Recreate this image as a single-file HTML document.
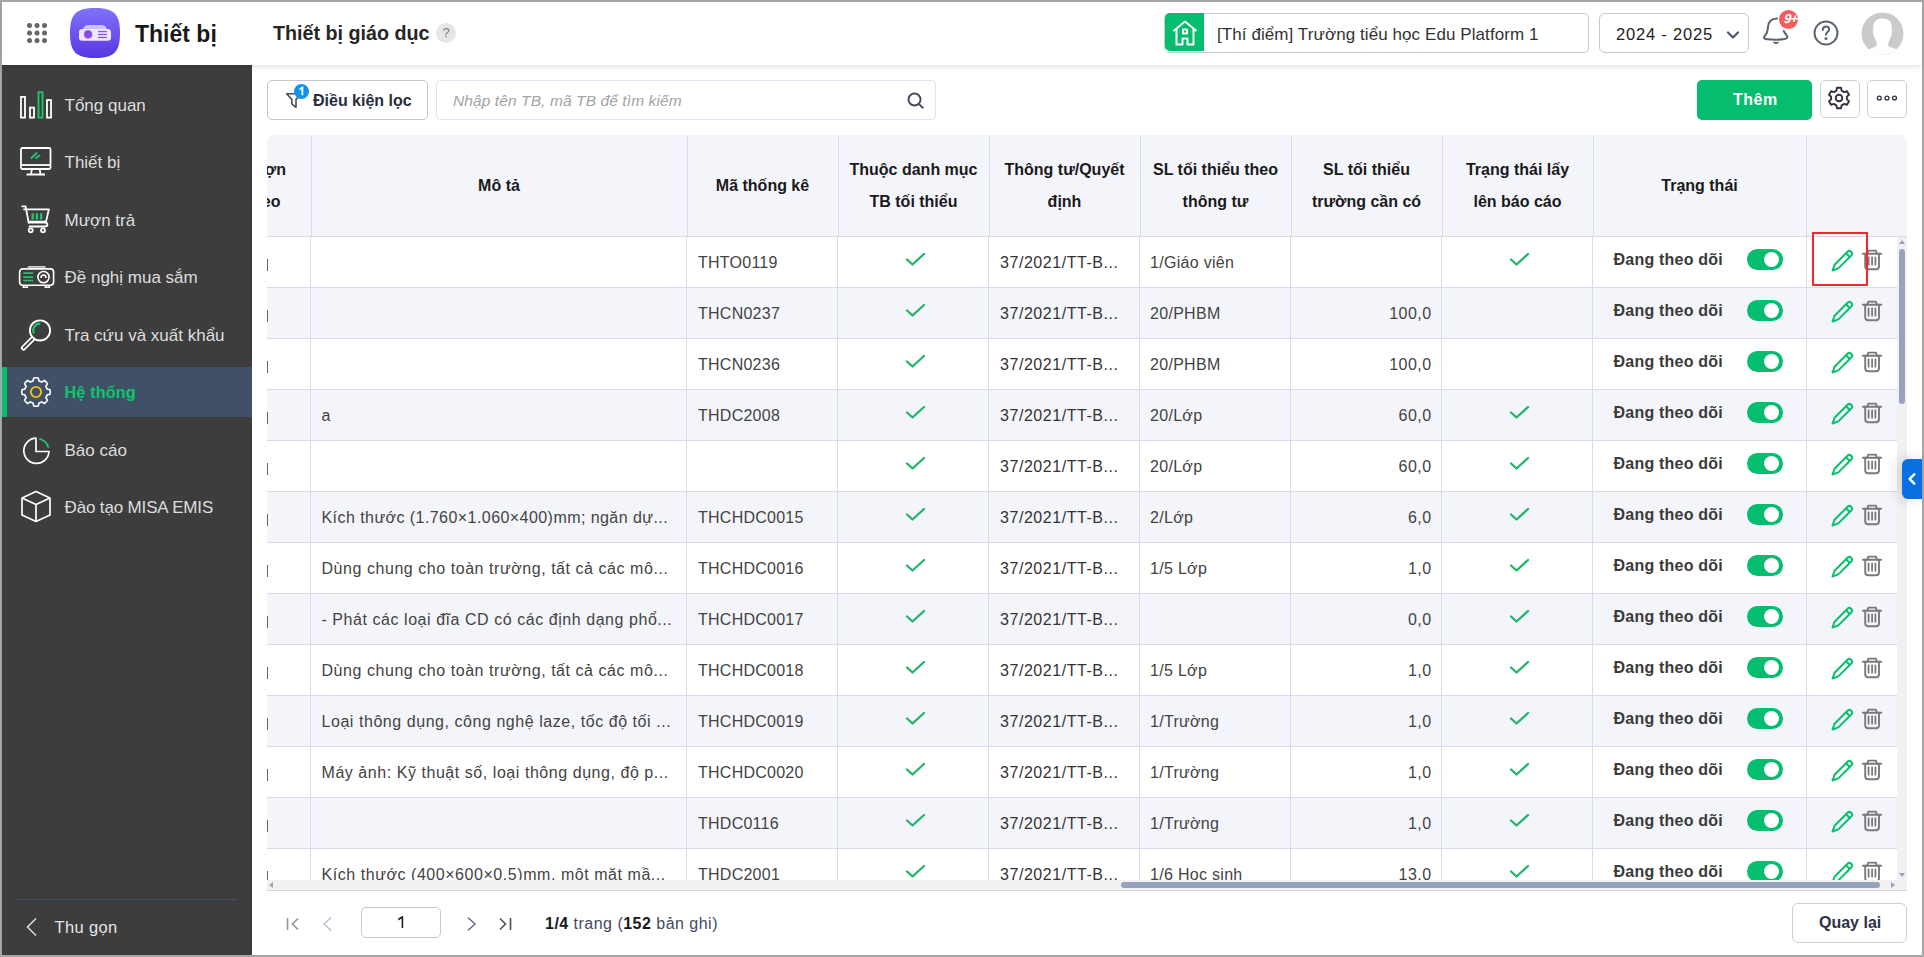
<!DOCTYPE html>
<html><head><meta charset="utf-8"><title>Thiết bị giáo dục</title>
<style>
*{box-sizing:border-box;margin:0;padding:0}
html,body{width:1924px;height:957px;overflow:hidden;background:#a6a6a6}
body{font-family:"Liberation Sans",sans-serif;position:relative;color:#333}
.abs{position:absolute}
.t{position:absolute;white-space:nowrap;line-height:1}
svg{display:block}
</style></head><body>
<div class="abs" style="left:2px;top:2px;width:1920px;height:953px;background:#fff"></div><div class="abs" style="left:2px;top:2px;width:1920px;height:63px;background:#fff;z-index:3;box-shadow:0 2px 5px rgba(0,0,0,0.11)"></div><div class="abs" style="left:0;top:0;z-index:4"><svg class="abs" style="left:27px;top:23px" width="20" height="20" viewBox="0 0 20 20"><circle cx="2.5" cy="2.5" r="2.5" fill="#666"/><circle cx="2.5" cy="10.0" r="2.5" fill="#666"/><circle cx="2.5" cy="17.5" r="2.5" fill="#666"/><circle cx="10.0" cy="2.5" r="2.5" fill="#666"/><circle cx="10.0" cy="10.0" r="2.5" fill="#666"/><circle cx="10.0" cy="17.5" r="2.5" fill="#666"/><circle cx="17.5" cy="2.5" r="2.5" fill="#666"/><circle cx="17.5" cy="10.0" r="2.5" fill="#666"/><circle cx="17.5" cy="17.5" r="2.5" fill="#666"/></svg><svg class="abs" style="left:70px;top:8px" width="50" height="50" viewBox="0 0 50 50">
<defs><linearGradient id="lg" x1="0" y1="0" x2="0" y2="1"><stop offset="0" stop-color="#7f74fa"/><stop offset="1" stop-color="#5a35e2"/></linearGradient>
<linearGradient id="pg" x1="1" y1="0" x2="0" y2="1"><stop offset="0" stop-color="#4f63ee"/><stop offset="1" stop-color="#b53ad6"/></linearGradient></defs>
<path d="M25 0 C44 0 50 6 50 25 C50 44 44 50 25 50 C6 50 0 44 0 25 C0 6 6 0 25 0Z" fill="url(#lg)"/>
<path d="M13 21.5 Q13.5 17 19 17 L31 17 Q36.5 17 37 21.5Z" fill="#cdc3fc"/>
<rect x="9" y="21" width="32" height="11.8" rx="3.3" fill="#efe9ff"/>
<circle cx="18.1" cy="26.4" r="4.1" fill="url(#pg)" stroke="#e27bd8" stroke-width="0.5"/>
<rect x="28.1" y="22.9" width="8.8" height="1.3" fill="#8a4fe6"/><rect x="28.1" y="25.8" width="8.8" height="1.3" fill="#8a4fe6"/><rect x="28.1" y="28.8" width="8.8" height="1.3" fill="#8a4fe6"/>
</svg><div class="t" style="left:135px;top:22.65px;font-size:23px;font-weight:700;color:#1a1a1a;">Thiết bị</div><div class="t" style="left:273px;top:23.76px;font-size:19.7px;font-weight:700;color:#262626;">Thiết bị giáo dục</div><div class="abs" style="left:436px;top:23px;width:20px;height:20px;border-radius:50%;background:#e6e6e6;color:#7a7a7a;font-size:13px;line-height:20px;text-align:center">?</div><div class="abs" style="left:1164px;top:13px;width:425px;height:40px;border:1px solid #c9c9c9;border-radius:5px"></div><div class="abs" style="left:1164.5px;top:13px;width:39.5px;height:38px;background:#04bd6f;border-radius:5px 0 0 5px"></div><svg class="abs" style="left:1172px;top:20px" width="26" height="26" viewBox="0 0 26 26" fill="none" stroke="#fff" stroke-width="2" stroke-linejoin="round">
<path d="M1.5 11 L13 1.5 L24.5 11"/><path d="M4.5 9 V24.5 H10.5 V18.5 H15.5 V24.5 H21.5 V9"/><rect x="11" y="9.5" width="4" height="4"/></svg><div class="t" style="left:1217px;top:25.75px;font-size:17px;font-weight:400;color:#333;letter-spacing:0.08px">[Thí điểm] Trường tiểu học Edu Platform 1</div><div class="abs" style="left:1599px;top:13px;width:150px;height:40px;border:1px solid #c9c9c9;border-radius:6px"></div><div class="t" style="left:1616px;top:25.98px;font-size:16.5px;font-weight:400;color:#222;letter-spacing:0.8px">2024 - 2025</div><svg class="abs" style="left:1726px;top:30px" width="14" height="10" viewBox="0 0 14 10"><path d="M2 2.5 L7 7.5 L12 2.5" fill="none" stroke="#505575" stroke-width="2.2" stroke-linecap="round" stroke-linejoin="round"/></svg><svg class="abs" style="left:1761px;top:14.8px" width="30" height="30" viewBox="0 0 30 30" fill="none" stroke="#5c6370" stroke-width="2" stroke-linecap="round">
<path d="M16 3.4 C10.3 3.5 7.3 6.8 7 12 C6.7 16.5 6.2 18.5 3.7 21 C2.3 22.6 3 23.9 6 24.2 C12 24.8 19 24.8 23.5 24.1 C26.2 23.6 27 22.4 25.6 20.4 C24.6 19 23.6 17.6 22.7 16"/><path d="M12.6 27.6 Q15 30 17.4 27.6 Z" fill="#5c6370" stroke-width="1"/></svg><div class="abs" style="left:1778.6px;top:9.5px;width:19.5px;height:19.5px;border-radius:50%;background:#f55d5d"></div><div class="abs" style="left:1781px;top:9px;width:20px;height:20px;color:#fff;font-size:13px;font-weight:700;line-height:19px;text-align:center;letter-spacing:-0.6px;transform:skewX(-14deg)">9+</div><svg class="abs" style="left:1813px;top:20px" width="26" height="26" viewBox="0 0 26 26" fill="none" stroke="#5c6370" stroke-width="2" stroke-linecap="round">
<circle cx="13" cy="13" r="11.5"/><path d="M9.8 10 C9.8 7.5 11.5 6.5 13 6.5 C14.8 6.5 16.2 7.7 16.2 9.5 C16.2 11.8 13 12 13 14.8"/><circle cx="13" cy="18.5" r="0.6" fill="#5c6370"/></svg><svg class="abs" style="left:1861px;top:12px" width="43" height="43" viewBox="0 0 43 43">
<defs><clipPath id="avc"><circle cx="21.5" cy="21.5" r="21"/></clipPath></defs>
<circle cx="21.5" cy="21.5" r="21" fill="#cbcbcb"/>
<path clip-path="url(#avc)" d="M21.5 6.6 C15.6 6.6 12.6 9.4 12.4 14.3 L12.1 18.6 C12 22.2 12.9 24.4 14 26.6 L15.9 31.8 C16.3 33.4 15.2 34.6 12.6 35.5 L9.6 36.6 C8 37.2 7 38.5 7 40 V48 H36 V40 C36 38.5 35 37.2 33.4 36.6 L30.4 35.5 C27.8 34.6 26.7 33.4 27.1 31.8 L29 26.6 C30.1 24.4 31 22.2 30.9 18.6 L30.6 14.3 C30.4 9.4 27.4 6.6 21.5 6.6Z" fill="#fff"/>
</svg></div><div class="abs" style="left:2px;top:65px;width:250px;height:890px;background:#3d3d3d"></div><div class="abs" style="left:2px;top:367px;width:250px;height:50px;background:#405066"></div><div class="abs" style="left:2px;top:367px;width:5px;height:50px;background:#04bd6f"></div><div class="t" style="left:64.5px;top:96.55px;font-size:17px;font-weight:400;color:#dedede;">Tổng quan</div><div class="t" style="left:64.5px;top:153.55px;font-size:17px;font-weight:400;color:#dedede;">Thiết bị</div><div class="t" style="left:64.5px;top:211.55px;font-size:17px;font-weight:400;color:#dedede;">Mượn trả</div><div class="t" style="left:64.5px;top:269.05px;font-size:17px;font-weight:400;color:#dedede;">Đề nghị mua sắm</div><div class="t" style="left:64.5px;top:326.55px;font-size:17px;font-weight:400;color:#dedede;">Tra cứu và xuất khẩu</div><div class="t" style="left:64.5px;top:384.23px;font-size:16.2px;font-weight:700;color:#0bc66c;letter-spacing:0.15px">Hệ thống</div><div class="t" style="left:64.5px;top:441.55px;font-size:17px;font-weight:400;color:#dedede;">Báo cáo</div><div class="t" style="left:64.5px;top:499.05px;font-size:17px;font-weight:400;color:#dedede;letter-spacing:-0.15px">Đào tạo MISA EMIS</div><svg class="abs" style="left:19px;top:91px" width="34" height="29" viewBox="0 0 34 29" fill="none" stroke-width="1.8">
<rect x="2" y="5.9" width="4" height="20.7" stroke="#fff"/><rect x="11" y="16.6" width="4" height="10" stroke="#fff"/><rect x="19.5" y="1.2" width="4" height="25.4" stroke="#22c56e"/><rect x="28" y="9.1" width="4" height="17.5" stroke="#fff"/></svg><svg class="abs" style="left:20px;top:147px" width="32" height="29" viewBox="0 0 32 29" fill="none" stroke-width="1.8">
<rect x="1" y="1" width="29.5" height="21" rx="1.5" stroke="#fff"/><path d="M1 18 H30.5" stroke="#fff"/><path d="M12 22 L11 26.5 M19.5 22 L20.5 26.5 M6.5 27.5 H25" stroke="#fff"/>
<path d="M11.5 11 L16.5 6 M16 11 L19.5 8.5" stroke="#22c56e" stroke-width="1.9" stroke-linecap="round"/></svg><svg class="abs" style="left:21px;top:205px" width="30" height="29" viewBox="0 0 30 29" fill="none" stroke-width="1.8" stroke-linecap="round" stroke-linejoin="round">
<path d="M1.3 1.4 H4.6 L7.7 17.6" stroke="#fff"/><path d="M3 4.3 H27.9 L25 16.6 H7.5" stroke="#fff"/>
<path d="M7.7 17.6 H24 C27.2 17.6 27.2 21.5 24 21.5 H8.5" stroke="#fff"/>
<circle cx="9.7" cy="25.3" r="2" stroke="#fff"/><circle cx="22" cy="25.3" r="2" stroke="#fff"/>
<path d="M11.7 8.3 V14.6 M15.9 8.3 V14.6 M20.1 8.3 V14.6" stroke="#22c56e" stroke-width="2.4" stroke-linecap="butt"/></svg><svg class="abs" style="left:18px;top:265px" width="37" height="24" viewBox="0 0 37 24" fill="none" stroke-width="1.6">
<rect x="1.6" y="3.9" width="34" height="16.4" rx="3.2" stroke="#fff"/><path d="M9.8 3.9 L11 1.9 H26.5 L27.6 3.9" stroke="#d0d0d0" stroke-width="1.8"/>
<path d="M5.4 20.3 V22.3 H9.3 V20.3 M27.4 20.3 V22.3 H31.3 V20.3" stroke="#fff"/>
<circle cx="25.5" cy="12.1" r="5.6" stroke="#fff"/><path d="M23 13 C23 10.7 24.1 10 25.5 10 C26.9 10 28 10.7 28 13" stroke="#fff"/>
<path d="M5.3 8.2 H15.2 M5.3 12.1 H15.2 M5.3 15.5 H15.2" stroke="#22c56e" stroke-width="1.7"/></svg><svg class="abs" style="left:20px;top:318px" width="33" height="34" viewBox="0 0 33 34" fill="none" stroke-linecap="round">
<circle cx="20" cy="12.4" r="10.1" stroke="#fff" stroke-width="1.8"/>
<path d="M12.3 21.2 L3.6 29.9" stroke="#fff" stroke-width="5.2"/><path d="M12.3 21.2 L3.6 29.9" stroke="#3d3d3d" stroke-width="1.8"/>
<path d="M13.61 14.73 A6.8 6.8 0 0 1 19.41 5.63" stroke="#22c56e" stroke-width="2.1"/></svg><svg class="abs" style="left:20px;top:375.6px" width="32" height="32" viewBox="0 0 32 32" fill="none">
<path d="M13.78 1.97 A14.2 14.2 0 0 1 18.22 1.97 L19.01 5.00 A11.4 11.4 0 0 1 21.65 6.10 L24.35 4.51 A14.2 14.2 0 0 1 27.49 7.65 L25.90 10.35 A11.4 11.4 0 0 1 27.00 12.99 L30.03 13.78 A14.2 14.2 0 0 1 30.03 18.22 L27.00 19.01 A11.4 11.4 0 0 1 25.90 21.65 L27.49 24.35 A14.2 14.2 0 0 1 24.35 27.49 L21.65 25.90 A11.4 11.4 0 0 1 19.01 27.00 L18.22 30.03 A14.2 14.2 0 0 1 13.78 30.03 L12.99 27.00 A11.4 11.4 0 0 1 10.35 25.90 L7.65 27.49 A14.2 14.2 0 0 1 4.51 24.35 L6.10 21.65 A11.4 11.4 0 0 1 5.00 19.01 L1.97 18.22 A14.2 14.2 0 0 1 1.97 13.78 L5.00 12.99 A11.4 11.4 0 0 1 6.10 10.35 L4.51 7.65 A14.2 14.2 0 0 1 7.65 4.51 L10.35 6.10 A11.4 11.4 0 0 1 12.99 5.00 L13.78 1.97Z" stroke="#fff" stroke-width="1.6" stroke-linejoin="round"/>
<circle cx="16" cy="16" r="5.1" stroke="#f2c10f" stroke-width="1.9"/></svg><svg class="abs" style="left:21.7px;top:435.6px" width="30" height="30" viewBox="0 0 30 30" fill="none" stroke-width="1.7">
<path d="M14 2.2 A12.6 12.6 0 1 0 27 15.5 H14 Z" stroke="#fff" stroke-linejoin="round"/><path d="M17.3 2.8 A12.6 12.6 0 0 1 26.5 11.5" stroke="#22c56e" stroke-width="1.8"/></svg><svg class="abs" style="left:20px;top:490px" width="32" height="33" viewBox="0 0 32 33" fill="none" stroke="#fff" stroke-width="1.7" stroke-linejoin="round">
<path d="M16 1.5 L30 8 V25 L16 31.5 L2 25 V8 Z"/><path d="M2 8 L16 14.5 L30 8 M16 14.5 V31.5"/></svg><div class="abs" style="left:17px;top:899px;width:220px;height:1px;background:#3f5066"></div><svg class="abs" style="left:25px;top:917px" width="14" height="20" viewBox="0 0 14 20"><path d="M11 1.5 L2.5 10 L11 18.5" fill="none" stroke="#dcdcdc" stroke-width="1.6"/></svg><div class="t" style="left:54.5px;top:918.98px;font-size:16.5px;font-weight:400;color:#e2e4ea;letter-spacing:0.35px">Thu gọn</div><div class="abs" style="left:267px;top:80px;width:161px;height:40px;border:1px solid #c8c8c8;border-radius:5px;background:#fff"></div><svg class="abs" style="left:285px;top:91px" width="20" height="18" viewBox="0 0 20 18" fill="none" stroke="#4a4f5c" stroke-width="1.6" stroke-linejoin="round">
<path d="M1.7 2.7 H16.5 L11 8.4 V16.3 L6.8 12.8 V8.4 Z"/></svg><div class="abs" style="left:294px;top:84px;width:15.4px;height:15.4px;border-radius:50%;background:#0f92e8"></div><svg class="abs" style="left:294px;top:84px" width="16" height="16" viewBox="0 0 16 16"><path d="M5.3 4.6 L8.2 2.5 H9.3 V11.2 H7.4 V5 L5.3 6.3 Z" fill="#fff"/></svg><div class="t" style="left:313px;top:92.70px;font-size:16px;font-weight:700;color:#262d40;">Điều kiện lọc</div><div class="abs" style="left:436px;top:80px;width:500px;height:40px;border:1px solid #e0e3f0;border-radius:5px;background:#fff"></div><div class="t" style="left:453px;top:93.33px;font-size:15.5px;font-weight:400;color:#a3a3a3;font-style:italic;letter-spacing:0.1px">Nhập tên TB, mã TB để tìm kiếm</div><svg class="abs" style="left:905.6px;top:91px" width="20" height="20" viewBox="0 0 20 20" fill="none" stroke="#434857" stroke-width="1.9" stroke-linecap="butt">
<circle cx="8.5" cy="8.5" r="6"/><path d="M12.8 12.8 L17.3 17.4"/></svg><div class="abs" style="left:1697px;top:80px;width:115px;height:40px;border-radius:5px;background:#04bd6f"></div><div class="t" style="left:1733px;top:92.40px;font-size:16px;font-weight:700;color:#fff;letter-spacing:0.5px">Thêm</div><div class="abs" style="left:1820px;top:80px;width:40px;height:38px;border:1px solid #cfcfcf;border-radius:5px;background:#fff"></div><svg class="abs" style="left:1827px;top:86px" width="24" height="24" viewBox="0 0 24 24" fill="none" stroke="#2d3142" stroke-width="1.9" stroke-linejoin="round">
<path d="M10 1.8 H14 L14.6 4.6 L17.3 6.1 L20 5.2 L22 8.7 L19.9 10.6 V13.4 L22 15.3 L20 18.8 L17.3 17.9 L14.6 19.4 L14 22.2 H10 L9.4 19.4 L6.7 17.9 L4 18.8 L2 15.3 L4.1 13.4 V10.6 L2 8.7 L4 5.2 L6.7 6.1 L9.4 4.6 Z"/>
<circle cx="12" cy="12" r="3.3"/></svg><div class="abs" style="left:1867px;top:80px;width:40px;height:38px;border:1px solid #cfcfcf;border-radius:5px;background:#fff"></div><svg class="abs" style="left:1875px;top:93px" width="24" height="10" viewBox="0 0 24 10" fill="none" stroke="#2d3142" stroke-width="1.3">
<circle cx="4.3" cy="5" r="1.95"/><circle cx="12" cy="5" r="1.95"/><circle cx="19.5" cy="5" r="1.95"/></svg><div class="abs" style="left:267px;top:135px;width:1640px;height:757px;overflow:hidden"><div class="abs" style="left:0;top:0;width:1640px;height:101px;background:#f4f5fa;border-radius:8px 8px 0 0"></div><div class="abs" style="left:0;top:101px;width:1640px;height:1px;background:#d9dbea"></div><div class="abs" style="left:44px;top:0;width:1px;height:101px;background:#d9dbea"></div><div class="abs" style="left:420px;top:0;width:1px;height:101px;background:#d9dbea"></div><div class="abs" style="left:571px;top:0;width:1px;height:101px;background:#d9dbea"></div><div class="abs" style="left:722px;top:0;width:1px;height:101px;background:#d9dbea"></div><div class="abs" style="left:873px;top:0;width:1px;height:101px;background:#d9dbea"></div><div class="abs" style="left:1024px;top:0;width:1px;height:101px;background:#d9dbea"></div><div class="abs" style="left:1175px;top:0;width:1px;height:101px;background:#d9dbea"></div><div class="abs" style="left:1326px;top:0;width:1px;height:101px;background:#d9dbea"></div><div class="abs" style="left:1539px;top:0;width:1px;height:101px;background:#d9dbea"></div><div class="t" style="left:232.0px;top:43.20px;width:200px;margin-left:-100px;text-align:center;font-size:16px;font-weight:700;color:#1a1a1a">Mô tả</div><div class="t" style="left:495.5px;top:43.20px;width:200px;margin-left:-100px;text-align:center;font-size:16px;font-weight:700;color:#1a1a1a">Mã thống kê</div><div class="t" style="left:646.5px;top:27.40px;width:200px;margin-left:-100px;text-align:center;font-size:16px;font-weight:700;color:#1a1a1a">Thuộc danh mục</div><div class="t" style="left:646.5px;top:59.00px;width:200px;margin-left:-100px;text-align:center;font-size:16px;font-weight:700;color:#1a1a1a">TB tối thiểu</div><div class="t" style="left:797.5px;top:27.40px;width:200px;margin-left:-100px;text-align:center;font-size:16px;font-weight:700;color:#1a1a1a">Thông tư/Quyết</div><div class="t" style="left:797.5px;top:59.00px;width:200px;margin-left:-100px;text-align:center;font-size:16px;font-weight:700;color:#1a1a1a">định</div><div class="t" style="left:948.5px;top:27.40px;width:200px;margin-left:-100px;text-align:center;font-size:16px;font-weight:700;color:#1a1a1a">SL tối thiểu theo</div><div class="t" style="left:948.5px;top:59.00px;width:200px;margin-left:-100px;text-align:center;font-size:16px;font-weight:700;color:#1a1a1a">thông tư</div><div class="t" style="left:1099.5px;top:27.40px;width:200px;margin-left:-100px;text-align:center;font-size:16px;font-weight:700;color:#1a1a1a">SL tối thiểu</div><div class="t" style="left:1099.5px;top:59.00px;width:200px;margin-left:-100px;text-align:center;font-size:16px;font-weight:700;color:#1a1a1a">trường cần có</div><div class="t" style="left:1250.5px;top:27.40px;width:200px;margin-left:-100px;text-align:center;font-size:16px;font-weight:700;color:#1a1a1a">Trạng thái lấy</div><div class="t" style="left:1250.5px;top:59.00px;width:200px;margin-left:-100px;text-align:center;font-size:16px;font-weight:700;color:#1a1a1a">lên báo cáo</div><div class="t" style="left:1432.5px;top:43.20px;width:200px;margin-left:-100px;text-align:center;font-size:16px;font-weight:700;color:#1a1a1a">Trạng thái</div><div class="t" style="left:-200px;top:27.40px;width:219px;text-align:right;font-size:16px;font-weight:700;color:#1a1a1a">Được mượn</div><div class="t" style="left:-200px;top:59.00px;width:213.5px;text-align:right;font-size:16px;font-weight:700;color:#1a1a1a">theo</div><div class="abs" style="left:0;top:102px;width:1630px;height:643px;overflow:hidden"><div class="abs" style="left:0;top:0px;width:1630px;height:51px;background:#fff;border-bottom:1px solid #d9dbea"></div><div class="abs" style="left:0;top:22.0px;width:1.3px;height:11.5px;background:#666"></div><div class="t" style="left:431.0px;top:18.20px;font-size:16px;color:#434343;letter-spacing:0.25px">THTO0119</div><svg class="abs" style="left:638.0px;top:14.5px" width="21" height="15" viewBox="0 0 21 15"><path d="M2 7.5 L7.5 12.5 L19 2" fill="none" stroke="#21b56b" stroke-width="2.3" stroke-linecap="round" stroke-linejoin="round"/></svg><div class="t" style="left:733.0px;top:18.20px;font-size:16px;color:#333;letter-spacing:0.55px">37/2021/TT-B...</div><div class="t" style="left:883.0px;top:18.20px;font-size:16px;color:#434343;letter-spacing:0.3px">1/Giáo viên</div><svg class="abs" style="left:1242.0px;top:14.5px" width="21" height="15" viewBox="0 0 21 15"><path d="M2 7.5 L7.5 12.5 L19 2" fill="none" stroke="#21b56b" stroke-width="2.3" stroke-linecap="round" stroke-linejoin="round"/></svg><div class="t" style="left:1346.5px;top:15.40px;font-size:16px;font-weight:700;color:#3a3a3a;letter-spacing:0.22px">Đang theo dõi</div><div class="abs" style="left:1480.0px;top:12.0px;width:36px;height:21px;border-radius:11px;background:#04bd6f"></div><div class="abs" style="left:1497.0px;top:15.0px;width:15px;height:15px;border-radius:50%;background:#fff"></div><svg class="abs" style="left:1562.6px;top:11.5px" width="24" height="24" viewBox="0 0 24 24" fill="none" stroke="#0abf6e" stroke-width="2" stroke-linejoin="round"><path d="M17.5 2.8 C18.6 1.7 20.3 1.9 21.2 2.8 C22.1 3.7 22.3 5.4 21.2 6.5 L8.3 19.4 L2.5 21.5 L4.6 15.7 Z"/><path d="M16 4.3 L19.7 8"/></svg><svg class="abs" style="left:1593.5px;top:12.0px" width="23" height="22" viewBox="0 0 23 22" fill="none" stroke="#7a7a7a" stroke-width="1.9" stroke-linejoin="round" stroke-linecap="round"><path d="M1.9 4.7 H20.2"/><path d="M6.3 4.6 L7.3 1.6 H14.9 L15.9 4.6"/><path d="M4.2 4.8 V17.2 Q4.2 20.2 7.2 20.2 H15 Q18 20.2 18 17.2 V4.8"/><path d="M7.6 8.4 V15.7 M11.1 8.4 V15.7 M14.4 8.4 V15.7" stroke-width="1.8"/></svg><div class="abs" style="left:0;top:51px;width:1630px;height:51px;background:#f4f5fa;border-bottom:1px solid #d9dbea"></div><div class="abs" style="left:0;top:73.0px;width:1.3px;height:11.5px;background:#666"></div><div class="t" style="left:431.0px;top:69.20px;font-size:16px;color:#434343;letter-spacing:0.25px">THCN0237</div><svg class="abs" style="left:638.0px;top:65.5px" width="21" height="15" viewBox="0 0 21 15"><path d="M2 7.5 L7.5 12.5 L19 2" fill="none" stroke="#21b56b" stroke-width="2.3" stroke-linecap="round" stroke-linejoin="round"/></svg><div class="t" style="left:733.0px;top:69.20px;font-size:16px;color:#333;letter-spacing:0.55px">37/2021/TT-B...</div><div class="t" style="left:883.0px;top:69.20px;font-size:16px;color:#434343;letter-spacing:0.3px">20/PHBM</div><div class="t" style="left:964.5px;top:69.20px;width:200px;text-align:right;font-size:16px;color:#434343;letter-spacing:0.45px">100,0</div><div class="t" style="left:1346.5px;top:66.40px;font-size:16px;font-weight:700;color:#3a3a3a;letter-spacing:0.22px">Đang theo dõi</div><div class="abs" style="left:1480.0px;top:63.0px;width:36px;height:21px;border-radius:11px;background:#04bd6f"></div><div class="abs" style="left:1497.0px;top:66.0px;width:15px;height:15px;border-radius:50%;background:#fff"></div><svg class="abs" style="left:1562.6px;top:62.5px" width="24" height="24" viewBox="0 0 24 24" fill="none" stroke="#0abf6e" stroke-width="2" stroke-linejoin="round"><path d="M17.5 2.8 C18.6 1.7 20.3 1.9 21.2 2.8 C22.1 3.7 22.3 5.4 21.2 6.5 L8.3 19.4 L2.5 21.5 L4.6 15.7 Z"/><path d="M16 4.3 L19.7 8"/></svg><svg class="abs" style="left:1593.5px;top:63.0px" width="23" height="22" viewBox="0 0 23 22" fill="none" stroke="#7a7a7a" stroke-width="1.9" stroke-linejoin="round" stroke-linecap="round"><path d="M1.9 4.7 H20.2"/><path d="M6.3 4.6 L7.3 1.6 H14.9 L15.9 4.6"/><path d="M4.2 4.8 V17.2 Q4.2 20.2 7.2 20.2 H15 Q18 20.2 18 17.2 V4.8"/><path d="M7.6 8.4 V15.7 M11.1 8.4 V15.7 M14.4 8.4 V15.7" stroke-width="1.8"/></svg><div class="abs" style="left:0;top:102px;width:1630px;height:51px;background:#fff;border-bottom:1px solid #d9dbea"></div><div class="abs" style="left:0;top:124.0px;width:1.3px;height:11.5px;background:#666"></div><div class="t" style="left:431.0px;top:120.20px;font-size:16px;color:#434343;letter-spacing:0.25px">THCN0236</div><svg class="abs" style="left:638.0px;top:116.5px" width="21" height="15" viewBox="0 0 21 15"><path d="M2 7.5 L7.5 12.5 L19 2" fill="none" stroke="#21b56b" stroke-width="2.3" stroke-linecap="round" stroke-linejoin="round"/></svg><div class="t" style="left:733.0px;top:120.20px;font-size:16px;color:#333;letter-spacing:0.55px">37/2021/TT-B...</div><div class="t" style="left:883.0px;top:120.20px;font-size:16px;color:#434343;letter-spacing:0.3px">20/PHBM</div><div class="t" style="left:964.5px;top:120.20px;width:200px;text-align:right;font-size:16px;color:#434343;letter-spacing:0.45px">100,0</div><div class="t" style="left:1346.5px;top:117.40px;font-size:16px;font-weight:700;color:#3a3a3a;letter-spacing:0.22px">Đang theo dõi</div><div class="abs" style="left:1480.0px;top:114.0px;width:36px;height:21px;border-radius:11px;background:#04bd6f"></div><div class="abs" style="left:1497.0px;top:117.0px;width:15px;height:15px;border-radius:50%;background:#fff"></div><svg class="abs" style="left:1562.6px;top:113.5px" width="24" height="24" viewBox="0 0 24 24" fill="none" stroke="#0abf6e" stroke-width="2" stroke-linejoin="round"><path d="M17.5 2.8 C18.6 1.7 20.3 1.9 21.2 2.8 C22.1 3.7 22.3 5.4 21.2 6.5 L8.3 19.4 L2.5 21.5 L4.6 15.7 Z"/><path d="M16 4.3 L19.7 8"/></svg><svg class="abs" style="left:1593.5px;top:114.0px" width="23" height="22" viewBox="0 0 23 22" fill="none" stroke="#7a7a7a" stroke-width="1.9" stroke-linejoin="round" stroke-linecap="round"><path d="M1.9 4.7 H20.2"/><path d="M6.3 4.6 L7.3 1.6 H14.9 L15.9 4.6"/><path d="M4.2 4.8 V17.2 Q4.2 20.2 7.2 20.2 H15 Q18 20.2 18 17.2 V4.8"/><path d="M7.6 8.4 V15.7 M11.1 8.4 V15.7 M14.4 8.4 V15.7" stroke-width="1.8"/></svg><div class="abs" style="left:0;top:153px;width:1630px;height:51px;background:#f4f5fa;border-bottom:1px solid #d9dbea"></div><div class="abs" style="left:0;top:175.0px;width:1.3px;height:11.5px;background:#666"></div><div class="t" style="left:54.5px;top:171.20px;font-size:16px;color:#434343;letter-spacing:0.55px">a</div><div class="t" style="left:431.0px;top:171.20px;font-size:16px;color:#434343;letter-spacing:0.25px">THDC2008</div><svg class="abs" style="left:638.0px;top:167.5px" width="21" height="15" viewBox="0 0 21 15"><path d="M2 7.5 L7.5 12.5 L19 2" fill="none" stroke="#21b56b" stroke-width="2.3" stroke-linecap="round" stroke-linejoin="round"/></svg><div class="t" style="left:733.0px;top:171.20px;font-size:16px;color:#333;letter-spacing:0.55px">37/2021/TT-B...</div><div class="t" style="left:883.0px;top:171.20px;font-size:16px;color:#434343;letter-spacing:0.3px">20/Lớp</div><div class="t" style="left:964.5px;top:171.20px;width:200px;text-align:right;font-size:16px;color:#434343;letter-spacing:0.45px">60,0</div><svg class="abs" style="left:1242.0px;top:167.5px" width="21" height="15" viewBox="0 0 21 15"><path d="M2 7.5 L7.5 12.5 L19 2" fill="none" stroke="#21b56b" stroke-width="2.3" stroke-linecap="round" stroke-linejoin="round"/></svg><div class="t" style="left:1346.5px;top:168.40px;font-size:16px;font-weight:700;color:#3a3a3a;letter-spacing:0.22px">Đang theo dõi</div><div class="abs" style="left:1480.0px;top:165.0px;width:36px;height:21px;border-radius:11px;background:#04bd6f"></div><div class="abs" style="left:1497.0px;top:168.0px;width:15px;height:15px;border-radius:50%;background:#fff"></div><svg class="abs" style="left:1562.6px;top:164.5px" width="24" height="24" viewBox="0 0 24 24" fill="none" stroke="#0abf6e" stroke-width="2" stroke-linejoin="round"><path d="M17.5 2.8 C18.6 1.7 20.3 1.9 21.2 2.8 C22.1 3.7 22.3 5.4 21.2 6.5 L8.3 19.4 L2.5 21.5 L4.6 15.7 Z"/><path d="M16 4.3 L19.7 8"/></svg><svg class="abs" style="left:1593.5px;top:165.0px" width="23" height="22" viewBox="0 0 23 22" fill="none" stroke="#7a7a7a" stroke-width="1.9" stroke-linejoin="round" stroke-linecap="round"><path d="M1.9 4.7 H20.2"/><path d="M6.3 4.6 L7.3 1.6 H14.9 L15.9 4.6"/><path d="M4.2 4.8 V17.2 Q4.2 20.2 7.2 20.2 H15 Q18 20.2 18 17.2 V4.8"/><path d="M7.6 8.4 V15.7 M11.1 8.4 V15.7 M14.4 8.4 V15.7" stroke-width="1.8"/></svg><div class="abs" style="left:0;top:204px;width:1630px;height:51px;background:#fff;border-bottom:1px solid #d9dbea"></div><div class="abs" style="left:0;top:226.0px;width:1.3px;height:11.5px;background:#666"></div><svg class="abs" style="left:638.0px;top:218.5px" width="21" height="15" viewBox="0 0 21 15"><path d="M2 7.5 L7.5 12.5 L19 2" fill="none" stroke="#21b56b" stroke-width="2.3" stroke-linecap="round" stroke-linejoin="round"/></svg><div class="t" style="left:733.0px;top:222.20px;font-size:16px;color:#333;letter-spacing:0.55px">37/2021/TT-B...</div><div class="t" style="left:883.0px;top:222.20px;font-size:16px;color:#434343;letter-spacing:0.3px">20/Lớp</div><div class="t" style="left:964.5px;top:222.20px;width:200px;text-align:right;font-size:16px;color:#434343;letter-spacing:0.45px">60,0</div><svg class="abs" style="left:1242.0px;top:218.5px" width="21" height="15" viewBox="0 0 21 15"><path d="M2 7.5 L7.5 12.5 L19 2" fill="none" stroke="#21b56b" stroke-width="2.3" stroke-linecap="round" stroke-linejoin="round"/></svg><div class="t" style="left:1346.5px;top:219.40px;font-size:16px;font-weight:700;color:#3a3a3a;letter-spacing:0.22px">Đang theo dõi</div><div class="abs" style="left:1480.0px;top:216.0px;width:36px;height:21px;border-radius:11px;background:#04bd6f"></div><div class="abs" style="left:1497.0px;top:219.0px;width:15px;height:15px;border-radius:50%;background:#fff"></div><svg class="abs" style="left:1562.6px;top:215.5px" width="24" height="24" viewBox="0 0 24 24" fill="none" stroke="#0abf6e" stroke-width="2" stroke-linejoin="round"><path d="M17.5 2.8 C18.6 1.7 20.3 1.9 21.2 2.8 C22.1 3.7 22.3 5.4 21.2 6.5 L8.3 19.4 L2.5 21.5 L4.6 15.7 Z"/><path d="M16 4.3 L19.7 8"/></svg><svg class="abs" style="left:1593.5px;top:216.0px" width="23" height="22" viewBox="0 0 23 22" fill="none" stroke="#7a7a7a" stroke-width="1.9" stroke-linejoin="round" stroke-linecap="round"><path d="M1.9 4.7 H20.2"/><path d="M6.3 4.6 L7.3 1.6 H14.9 L15.9 4.6"/><path d="M4.2 4.8 V17.2 Q4.2 20.2 7.2 20.2 H15 Q18 20.2 18 17.2 V4.8"/><path d="M7.6 8.4 V15.7 M11.1 8.4 V15.7 M14.4 8.4 V15.7" stroke-width="1.8"/></svg><div class="abs" style="left:0;top:255px;width:1630px;height:51px;background:#f4f5fa;border-bottom:1px solid #d9dbea"></div><div class="abs" style="left:0;top:277.0px;width:1.3px;height:11.5px;background:#666"></div><div class="t" style="left:54.5px;top:273.20px;font-size:16px;color:#434343;letter-spacing:0.44px">Kích thước (1.760×1.060×400)mm; ngăn dự...</div><div class="t" style="left:431.0px;top:273.20px;font-size:16px;color:#434343;letter-spacing:0.25px">THCHDC0015</div><svg class="abs" style="left:638.0px;top:269.5px" width="21" height="15" viewBox="0 0 21 15"><path d="M2 7.5 L7.5 12.5 L19 2" fill="none" stroke="#21b56b" stroke-width="2.3" stroke-linecap="round" stroke-linejoin="round"/></svg><div class="t" style="left:733.0px;top:273.20px;font-size:16px;color:#333;letter-spacing:0.55px">37/2021/TT-B...</div><div class="t" style="left:883.0px;top:273.20px;font-size:16px;color:#434343;letter-spacing:0.3px">2/Lớp</div><div class="t" style="left:964.5px;top:273.20px;width:200px;text-align:right;font-size:16px;color:#434343;letter-spacing:0.45px">6,0</div><svg class="abs" style="left:1242.0px;top:269.5px" width="21" height="15" viewBox="0 0 21 15"><path d="M2 7.5 L7.5 12.5 L19 2" fill="none" stroke="#21b56b" stroke-width="2.3" stroke-linecap="round" stroke-linejoin="round"/></svg><div class="t" style="left:1346.5px;top:270.40px;font-size:16px;font-weight:700;color:#3a3a3a;letter-spacing:0.22px">Đang theo dõi</div><div class="abs" style="left:1480.0px;top:267.0px;width:36px;height:21px;border-radius:11px;background:#04bd6f"></div><div class="abs" style="left:1497.0px;top:270.0px;width:15px;height:15px;border-radius:50%;background:#fff"></div><svg class="abs" style="left:1562.6px;top:266.5px" width="24" height="24" viewBox="0 0 24 24" fill="none" stroke="#0abf6e" stroke-width="2" stroke-linejoin="round"><path d="M17.5 2.8 C18.6 1.7 20.3 1.9 21.2 2.8 C22.1 3.7 22.3 5.4 21.2 6.5 L8.3 19.4 L2.5 21.5 L4.6 15.7 Z"/><path d="M16 4.3 L19.7 8"/></svg><svg class="abs" style="left:1593.5px;top:267.0px" width="23" height="22" viewBox="0 0 23 22" fill="none" stroke="#7a7a7a" stroke-width="1.9" stroke-linejoin="round" stroke-linecap="round"><path d="M1.9 4.7 H20.2"/><path d="M6.3 4.6 L7.3 1.6 H14.9 L15.9 4.6"/><path d="M4.2 4.8 V17.2 Q4.2 20.2 7.2 20.2 H15 Q18 20.2 18 17.2 V4.8"/><path d="M7.6 8.4 V15.7 M11.1 8.4 V15.7 M14.4 8.4 V15.7" stroke-width="1.8"/></svg><div class="abs" style="left:0;top:306px;width:1630px;height:51px;background:#fff;border-bottom:1px solid #d9dbea"></div><div class="abs" style="left:0;top:328.0px;width:1.3px;height:11.5px;background:#666"></div><div class="t" style="left:54.5px;top:324.20px;font-size:16px;color:#434343;letter-spacing:0.55px">Dùng chung cho toàn trường, tất cả các mô...</div><div class="t" style="left:431.0px;top:324.20px;font-size:16px;color:#434343;letter-spacing:0.25px">THCHDC0016</div><svg class="abs" style="left:638.0px;top:320.5px" width="21" height="15" viewBox="0 0 21 15"><path d="M2 7.5 L7.5 12.5 L19 2" fill="none" stroke="#21b56b" stroke-width="2.3" stroke-linecap="round" stroke-linejoin="round"/></svg><div class="t" style="left:733.0px;top:324.20px;font-size:16px;color:#333;letter-spacing:0.55px">37/2021/TT-B...</div><div class="t" style="left:883.0px;top:324.20px;font-size:16px;color:#434343;letter-spacing:0.3px">1/5 Lớp</div><div class="t" style="left:964.5px;top:324.20px;width:200px;text-align:right;font-size:16px;color:#434343;letter-spacing:0.45px">1,0</div><svg class="abs" style="left:1242.0px;top:320.5px" width="21" height="15" viewBox="0 0 21 15"><path d="M2 7.5 L7.5 12.5 L19 2" fill="none" stroke="#21b56b" stroke-width="2.3" stroke-linecap="round" stroke-linejoin="round"/></svg><div class="t" style="left:1346.5px;top:321.40px;font-size:16px;font-weight:700;color:#3a3a3a;letter-spacing:0.22px">Đang theo dõi</div><div class="abs" style="left:1480.0px;top:318.0px;width:36px;height:21px;border-radius:11px;background:#04bd6f"></div><div class="abs" style="left:1497.0px;top:321.0px;width:15px;height:15px;border-radius:50%;background:#fff"></div><svg class="abs" style="left:1562.6px;top:317.5px" width="24" height="24" viewBox="0 0 24 24" fill="none" stroke="#0abf6e" stroke-width="2" stroke-linejoin="round"><path d="M17.5 2.8 C18.6 1.7 20.3 1.9 21.2 2.8 C22.1 3.7 22.3 5.4 21.2 6.5 L8.3 19.4 L2.5 21.5 L4.6 15.7 Z"/><path d="M16 4.3 L19.7 8"/></svg><svg class="abs" style="left:1593.5px;top:318.0px" width="23" height="22" viewBox="0 0 23 22" fill="none" stroke="#7a7a7a" stroke-width="1.9" stroke-linejoin="round" stroke-linecap="round"><path d="M1.9 4.7 H20.2"/><path d="M6.3 4.6 L7.3 1.6 H14.9 L15.9 4.6"/><path d="M4.2 4.8 V17.2 Q4.2 20.2 7.2 20.2 H15 Q18 20.2 18 17.2 V4.8"/><path d="M7.6 8.4 V15.7 M11.1 8.4 V15.7 M14.4 8.4 V15.7" stroke-width="1.8"/></svg><div class="abs" style="left:0;top:357px;width:1630px;height:51px;background:#f4f5fa;border-bottom:1px solid #d9dbea"></div><div class="abs" style="left:0;top:379.0px;width:1.3px;height:11.5px;background:#666"></div><div class="t" style="left:54.5px;top:375.20px;font-size:16px;color:#434343;letter-spacing:0.55px">- Phát các loại đĩa CD có các định dạng phổ...</div><div class="t" style="left:431.0px;top:375.20px;font-size:16px;color:#434343;letter-spacing:0.25px">THCHDC0017</div><svg class="abs" style="left:638.0px;top:371.5px" width="21" height="15" viewBox="0 0 21 15"><path d="M2 7.5 L7.5 12.5 L19 2" fill="none" stroke="#21b56b" stroke-width="2.3" stroke-linecap="round" stroke-linejoin="round"/></svg><div class="t" style="left:733.0px;top:375.20px;font-size:16px;color:#333;letter-spacing:0.55px">37/2021/TT-B...</div><div class="t" style="left:964.5px;top:375.20px;width:200px;text-align:right;font-size:16px;color:#434343;letter-spacing:0.45px">0,0</div><svg class="abs" style="left:1242.0px;top:371.5px" width="21" height="15" viewBox="0 0 21 15"><path d="M2 7.5 L7.5 12.5 L19 2" fill="none" stroke="#21b56b" stroke-width="2.3" stroke-linecap="round" stroke-linejoin="round"/></svg><div class="t" style="left:1346.5px;top:372.40px;font-size:16px;font-weight:700;color:#3a3a3a;letter-spacing:0.22px">Đang theo dõi</div><div class="abs" style="left:1480.0px;top:369.0px;width:36px;height:21px;border-radius:11px;background:#04bd6f"></div><div class="abs" style="left:1497.0px;top:372.0px;width:15px;height:15px;border-radius:50%;background:#fff"></div><svg class="abs" style="left:1562.6px;top:368.5px" width="24" height="24" viewBox="0 0 24 24" fill="none" stroke="#0abf6e" stroke-width="2" stroke-linejoin="round"><path d="M17.5 2.8 C18.6 1.7 20.3 1.9 21.2 2.8 C22.1 3.7 22.3 5.4 21.2 6.5 L8.3 19.4 L2.5 21.5 L4.6 15.7 Z"/><path d="M16 4.3 L19.7 8"/></svg><svg class="abs" style="left:1593.5px;top:369.0px" width="23" height="22" viewBox="0 0 23 22" fill="none" stroke="#7a7a7a" stroke-width="1.9" stroke-linejoin="round" stroke-linecap="round"><path d="M1.9 4.7 H20.2"/><path d="M6.3 4.6 L7.3 1.6 H14.9 L15.9 4.6"/><path d="M4.2 4.8 V17.2 Q4.2 20.2 7.2 20.2 H15 Q18 20.2 18 17.2 V4.8"/><path d="M7.6 8.4 V15.7 M11.1 8.4 V15.7 M14.4 8.4 V15.7" stroke-width="1.8"/></svg><div class="abs" style="left:0;top:408px;width:1630px;height:51px;background:#fff;border-bottom:1px solid #d9dbea"></div><div class="abs" style="left:0;top:430.0px;width:1.3px;height:11.5px;background:#666"></div><div class="t" style="left:54.5px;top:426.20px;font-size:16px;color:#434343;letter-spacing:0.55px">Dùng chung cho toàn trường, tất cả các mô...</div><div class="t" style="left:431.0px;top:426.20px;font-size:16px;color:#434343;letter-spacing:0.25px">THCHDC0018</div><svg class="abs" style="left:638.0px;top:422.5px" width="21" height="15" viewBox="0 0 21 15"><path d="M2 7.5 L7.5 12.5 L19 2" fill="none" stroke="#21b56b" stroke-width="2.3" stroke-linecap="round" stroke-linejoin="round"/></svg><div class="t" style="left:733.0px;top:426.20px;font-size:16px;color:#333;letter-spacing:0.55px">37/2021/TT-B...</div><div class="t" style="left:883.0px;top:426.20px;font-size:16px;color:#434343;letter-spacing:0.3px">1/5 Lớp</div><div class="t" style="left:964.5px;top:426.20px;width:200px;text-align:right;font-size:16px;color:#434343;letter-spacing:0.45px">1,0</div><svg class="abs" style="left:1242.0px;top:422.5px" width="21" height="15" viewBox="0 0 21 15"><path d="M2 7.5 L7.5 12.5 L19 2" fill="none" stroke="#21b56b" stroke-width="2.3" stroke-linecap="round" stroke-linejoin="round"/></svg><div class="t" style="left:1346.5px;top:423.40px;font-size:16px;font-weight:700;color:#3a3a3a;letter-spacing:0.22px">Đang theo dõi</div><div class="abs" style="left:1480.0px;top:420.0px;width:36px;height:21px;border-radius:11px;background:#04bd6f"></div><div class="abs" style="left:1497.0px;top:423.0px;width:15px;height:15px;border-radius:50%;background:#fff"></div><svg class="abs" style="left:1562.6px;top:419.5px" width="24" height="24" viewBox="0 0 24 24" fill="none" stroke="#0abf6e" stroke-width="2" stroke-linejoin="round"><path d="M17.5 2.8 C18.6 1.7 20.3 1.9 21.2 2.8 C22.1 3.7 22.3 5.4 21.2 6.5 L8.3 19.4 L2.5 21.5 L4.6 15.7 Z"/><path d="M16 4.3 L19.7 8"/></svg><svg class="abs" style="left:1593.5px;top:420.0px" width="23" height="22" viewBox="0 0 23 22" fill="none" stroke="#7a7a7a" stroke-width="1.9" stroke-linejoin="round" stroke-linecap="round"><path d="M1.9 4.7 H20.2"/><path d="M6.3 4.6 L7.3 1.6 H14.9 L15.9 4.6"/><path d="M4.2 4.8 V17.2 Q4.2 20.2 7.2 20.2 H15 Q18 20.2 18 17.2 V4.8"/><path d="M7.6 8.4 V15.7 M11.1 8.4 V15.7 M14.4 8.4 V15.7" stroke-width="1.8"/></svg><div class="abs" style="left:0;top:459px;width:1630px;height:51px;background:#f4f5fa;border-bottom:1px solid #d9dbea"></div><div class="abs" style="left:0;top:481.0px;width:1.3px;height:11.5px;background:#666"></div><div class="t" style="left:54.5px;top:477.20px;font-size:16px;color:#434343;letter-spacing:0.55px">Loại thông dụng, công nghệ laze, tốc độ tối ...</div><div class="t" style="left:431.0px;top:477.20px;font-size:16px;color:#434343;letter-spacing:0.25px">THCHDC0019</div><svg class="abs" style="left:638.0px;top:473.5px" width="21" height="15" viewBox="0 0 21 15"><path d="M2 7.5 L7.5 12.5 L19 2" fill="none" stroke="#21b56b" stroke-width="2.3" stroke-linecap="round" stroke-linejoin="round"/></svg><div class="t" style="left:733.0px;top:477.20px;font-size:16px;color:#333;letter-spacing:0.55px">37/2021/TT-B...</div><div class="t" style="left:883.0px;top:477.20px;font-size:16px;color:#434343;letter-spacing:0.3px">1/Trường</div><div class="t" style="left:964.5px;top:477.20px;width:200px;text-align:right;font-size:16px;color:#434343;letter-spacing:0.45px">1,0</div><svg class="abs" style="left:1242.0px;top:473.5px" width="21" height="15" viewBox="0 0 21 15"><path d="M2 7.5 L7.5 12.5 L19 2" fill="none" stroke="#21b56b" stroke-width="2.3" stroke-linecap="round" stroke-linejoin="round"/></svg><div class="t" style="left:1346.5px;top:474.40px;font-size:16px;font-weight:700;color:#3a3a3a;letter-spacing:0.22px">Đang theo dõi</div><div class="abs" style="left:1480.0px;top:471.0px;width:36px;height:21px;border-radius:11px;background:#04bd6f"></div><div class="abs" style="left:1497.0px;top:474.0px;width:15px;height:15px;border-radius:50%;background:#fff"></div><svg class="abs" style="left:1562.6px;top:470.5px" width="24" height="24" viewBox="0 0 24 24" fill="none" stroke="#0abf6e" stroke-width="2" stroke-linejoin="round"><path d="M17.5 2.8 C18.6 1.7 20.3 1.9 21.2 2.8 C22.1 3.7 22.3 5.4 21.2 6.5 L8.3 19.4 L2.5 21.5 L4.6 15.7 Z"/><path d="M16 4.3 L19.7 8"/></svg><svg class="abs" style="left:1593.5px;top:471.0px" width="23" height="22" viewBox="0 0 23 22" fill="none" stroke="#7a7a7a" stroke-width="1.9" stroke-linejoin="round" stroke-linecap="round"><path d="M1.9 4.7 H20.2"/><path d="M6.3 4.6 L7.3 1.6 H14.9 L15.9 4.6"/><path d="M4.2 4.8 V17.2 Q4.2 20.2 7.2 20.2 H15 Q18 20.2 18 17.2 V4.8"/><path d="M7.6 8.4 V15.7 M11.1 8.4 V15.7 M14.4 8.4 V15.7" stroke-width="1.8"/></svg><div class="abs" style="left:0;top:510px;width:1630px;height:51px;background:#fff;border-bottom:1px solid #d9dbea"></div><div class="abs" style="left:0;top:532.0px;width:1.3px;height:11.5px;background:#666"></div><div class="t" style="left:54.5px;top:528.20px;font-size:16px;color:#434343;letter-spacing:0.55px">Máy ảnh: Kỹ thuật số, loại thông dụng, độ p...</div><div class="t" style="left:431.0px;top:528.20px;font-size:16px;color:#434343;letter-spacing:0.25px">THCHDC0020</div><svg class="abs" style="left:638.0px;top:524.5px" width="21" height="15" viewBox="0 0 21 15"><path d="M2 7.5 L7.5 12.5 L19 2" fill="none" stroke="#21b56b" stroke-width="2.3" stroke-linecap="round" stroke-linejoin="round"/></svg><div class="t" style="left:733.0px;top:528.20px;font-size:16px;color:#333;letter-spacing:0.55px">37/2021/TT-B...</div><div class="t" style="left:883.0px;top:528.20px;font-size:16px;color:#434343;letter-spacing:0.3px">1/Trường</div><div class="t" style="left:964.5px;top:528.20px;width:200px;text-align:right;font-size:16px;color:#434343;letter-spacing:0.45px">1,0</div><svg class="abs" style="left:1242.0px;top:524.5px" width="21" height="15" viewBox="0 0 21 15"><path d="M2 7.5 L7.5 12.5 L19 2" fill="none" stroke="#21b56b" stroke-width="2.3" stroke-linecap="round" stroke-linejoin="round"/></svg><div class="t" style="left:1346.5px;top:525.40px;font-size:16px;font-weight:700;color:#3a3a3a;letter-spacing:0.22px">Đang theo dõi</div><div class="abs" style="left:1480.0px;top:522.0px;width:36px;height:21px;border-radius:11px;background:#04bd6f"></div><div class="abs" style="left:1497.0px;top:525.0px;width:15px;height:15px;border-radius:50%;background:#fff"></div><svg class="abs" style="left:1562.6px;top:521.5px" width="24" height="24" viewBox="0 0 24 24" fill="none" stroke="#0abf6e" stroke-width="2" stroke-linejoin="round"><path d="M17.5 2.8 C18.6 1.7 20.3 1.9 21.2 2.8 C22.1 3.7 22.3 5.4 21.2 6.5 L8.3 19.4 L2.5 21.5 L4.6 15.7 Z"/><path d="M16 4.3 L19.7 8"/></svg><svg class="abs" style="left:1593.5px;top:522.0px" width="23" height="22" viewBox="0 0 23 22" fill="none" stroke="#7a7a7a" stroke-width="1.9" stroke-linejoin="round" stroke-linecap="round"><path d="M1.9 4.7 H20.2"/><path d="M6.3 4.6 L7.3 1.6 H14.9 L15.9 4.6"/><path d="M4.2 4.8 V17.2 Q4.2 20.2 7.2 20.2 H15 Q18 20.2 18 17.2 V4.8"/><path d="M7.6 8.4 V15.7 M11.1 8.4 V15.7 M14.4 8.4 V15.7" stroke-width="1.8"/></svg><div class="abs" style="left:0;top:561px;width:1630px;height:51px;background:#f4f5fa;border-bottom:1px solid #d9dbea"></div><div class="abs" style="left:0;top:583.0px;width:1.3px;height:11.5px;background:#666"></div><div class="t" style="left:431.0px;top:579.20px;font-size:16px;color:#434343;letter-spacing:0.25px">THDC0116</div><svg class="abs" style="left:638.0px;top:575.5px" width="21" height="15" viewBox="0 0 21 15"><path d="M2 7.5 L7.5 12.5 L19 2" fill="none" stroke="#21b56b" stroke-width="2.3" stroke-linecap="round" stroke-linejoin="round"/></svg><div class="t" style="left:733.0px;top:579.20px;font-size:16px;color:#333;letter-spacing:0.55px">37/2021/TT-B...</div><div class="t" style="left:883.0px;top:579.20px;font-size:16px;color:#434343;letter-spacing:0.3px">1/Trường</div><div class="t" style="left:964.5px;top:579.20px;width:200px;text-align:right;font-size:16px;color:#434343;letter-spacing:0.45px">1,0</div><svg class="abs" style="left:1242.0px;top:575.5px" width="21" height="15" viewBox="0 0 21 15"><path d="M2 7.5 L7.5 12.5 L19 2" fill="none" stroke="#21b56b" stroke-width="2.3" stroke-linecap="round" stroke-linejoin="round"/></svg><div class="t" style="left:1346.5px;top:576.40px;font-size:16px;font-weight:700;color:#3a3a3a;letter-spacing:0.22px">Đang theo dõi</div><div class="abs" style="left:1480.0px;top:573.0px;width:36px;height:21px;border-radius:11px;background:#04bd6f"></div><div class="abs" style="left:1497.0px;top:576.0px;width:15px;height:15px;border-radius:50%;background:#fff"></div><svg class="abs" style="left:1562.6px;top:572.5px" width="24" height="24" viewBox="0 0 24 24" fill="none" stroke="#0abf6e" stroke-width="2" stroke-linejoin="round"><path d="M17.5 2.8 C18.6 1.7 20.3 1.9 21.2 2.8 C22.1 3.7 22.3 5.4 21.2 6.5 L8.3 19.4 L2.5 21.5 L4.6 15.7 Z"/><path d="M16 4.3 L19.7 8"/></svg><svg class="abs" style="left:1593.5px;top:573.0px" width="23" height="22" viewBox="0 0 23 22" fill="none" stroke="#7a7a7a" stroke-width="1.9" stroke-linejoin="round" stroke-linecap="round"><path d="M1.9 4.7 H20.2"/><path d="M6.3 4.6 L7.3 1.6 H14.9 L15.9 4.6"/><path d="M4.2 4.8 V17.2 Q4.2 20.2 7.2 20.2 H15 Q18 20.2 18 17.2 V4.8"/><path d="M7.6 8.4 V15.7 M11.1 8.4 V15.7 M14.4 8.4 V15.7" stroke-width="1.8"/></svg><div class="abs" style="left:0;top:612px;width:1630px;height:51px;background:#fff;border-bottom:1px solid #d9dbea"></div><div class="abs" style="left:0;top:634.0px;width:1.3px;height:11.5px;background:#666"></div><div class="t" style="left:54.5px;top:630.20px;font-size:16px;color:#434343;letter-spacing:0.55px">Kích thước (400×600×0.5)mm, một mặt mầ...</div><div class="t" style="left:431.0px;top:630.20px;font-size:16px;color:#434343;letter-spacing:0.25px">THDC2001</div><svg class="abs" style="left:638.0px;top:626.5px" width="21" height="15" viewBox="0 0 21 15"><path d="M2 7.5 L7.5 12.5 L19 2" fill="none" stroke="#21b56b" stroke-width="2.3" stroke-linecap="round" stroke-linejoin="round"/></svg><div class="t" style="left:733.0px;top:630.20px;font-size:16px;color:#333;letter-spacing:0.55px">37/2021/TT-B...</div><div class="t" style="left:883.0px;top:630.20px;font-size:16px;color:#434343;letter-spacing:0.3px">1/6 Học sinh</div><div class="t" style="left:964.5px;top:630.20px;width:200px;text-align:right;font-size:16px;color:#434343;letter-spacing:0.45px">13,0</div><svg class="abs" style="left:1242.0px;top:626.5px" width="21" height="15" viewBox="0 0 21 15"><path d="M2 7.5 L7.5 12.5 L19 2" fill="none" stroke="#21b56b" stroke-width="2.3" stroke-linecap="round" stroke-linejoin="round"/></svg><div class="t" style="left:1346.5px;top:627.40px;font-size:16px;font-weight:700;color:#3a3a3a;letter-spacing:0.22px">Đang theo dõi</div><div class="abs" style="left:1480.0px;top:624.0px;width:36px;height:21px;border-radius:11px;background:#04bd6f"></div><div class="abs" style="left:1497.0px;top:627.0px;width:15px;height:15px;border-radius:50%;background:#fff"></div><svg class="abs" style="left:1562.6px;top:623.5px" width="24" height="24" viewBox="0 0 24 24" fill="none" stroke="#0abf6e" stroke-width="2" stroke-linejoin="round"><path d="M17.5 2.8 C18.6 1.7 20.3 1.9 21.2 2.8 C22.1 3.7 22.3 5.4 21.2 6.5 L8.3 19.4 L2.5 21.5 L4.6 15.7 Z"/><path d="M16 4.3 L19.7 8"/></svg><svg class="abs" style="left:1593.5px;top:624.0px" width="23" height="22" viewBox="0 0 23 22" fill="none" stroke="#7a7a7a" stroke-width="1.9" stroke-linejoin="round" stroke-linecap="round"><path d="M1.9 4.7 H20.2"/><path d="M6.3 4.6 L7.3 1.6 H14.9 L15.9 4.6"/><path d="M4.2 4.8 V17.2 Q4.2 20.2 7.2 20.2 H15 Q18 20.2 18 17.2 V4.8"/><path d="M7.6 8.4 V15.7 M11.1 8.4 V15.7 M14.4 8.4 V15.7" stroke-width="1.8"/></svg><div class="abs" style="left:43px;top:0;width:1px;height:700px;background:#d9dbea"></div><div class="abs" style="left:419px;top:0;width:1px;height:700px;background:#d9dbea"></div><div class="abs" style="left:570px;top:0;width:1px;height:700px;background:#d9dbea"></div><div class="abs" style="left:721px;top:0;width:1px;height:700px;background:#d9dbea"></div><div class="abs" style="left:872px;top:0;width:1px;height:700px;background:#d9dbea"></div><div class="abs" style="left:1023px;top:0;width:1px;height:700px;background:#d9dbea"></div><div class="abs" style="left:1174px;top:0;width:1px;height:700px;background:#d9dbea"></div><div class="abs" style="left:1325px;top:0;width:1px;height:700px;background:#d9dbea"></div><div class="abs" style="left:1539px;top:0;width:1px;height:700px;background:#d9dbea"></div></div><div class="abs" style="left:1630px;top:102px;width:10px;height:643px;background:#f1f1f1"></div><svg class="abs" style="left:1632px;top:105px" width="6" height="4" viewBox="0 0 6 4"><path d="M0 4 L3 0 L6 4Z" fill="#97a3bd"/></svg><div class="abs" style="left:1632px;top:114px;width:6px;height:155px;border-radius:3px;background:#97a3bd"></div><svg class="abs" style="left:1632px;top:738px" width="6" height="4" viewBox="0 0 6 4"><path d="M0 0 L3 4 L6 0Z" fill="#97a3bd"/></svg><div class="abs" style="left:0;top:745px;width:1640px;height:10px;background:#f1f1f1"></div><div class="abs" style="left:0;top:755px;width:1640px;height:1px;background:#d4d4d4"></div><svg class="abs" style="left:2px;top:747px" width="4" height="6" viewBox="0 0 4 6"><path d="M4 0 L0 3 L4 6Z" fill="#97a3bd"/></svg><div class="abs" style="left:854px;top:747px;width:759px;height:6px;border-radius:3px;background:#97a3bd"></div><svg class="abs" style="left:1624px;top:747px" width="4" height="6" viewBox="0 0 4 6"><path d="M0 0 L4 3 L0 6Z" fill="#97a3bd"/></svg></div><div class="abs" style="left:1812px;top:232px;width:56px;height:54px;border:2px solid #f02a2a"></div><div class="abs" style="left:1902px;top:459px;width:20px;height:40px;border-radius:6px 0 0 6px;background:#0970e4;box-shadow:-3px 0 14px rgba(0,0,0,0.16)"></div><svg class="abs" style="left:1907px;top:471px" width="10" height="16" viewBox="0 0 10 16"><path d="M7.3 3.3 L2.6 7.9 L7.3 12.7" fill="none" stroke="#fff" stroke-width="2.4" stroke-linecap="round" stroke-linejoin="round"/></svg><svg class="abs" style="left:285px;top:916px" width="16" height="16" viewBox="0 0 16 16" fill="none" stroke="#9a9a9a" stroke-width="1.7"><path d="M2.5 2 V14"/><path d="M13 2.5 L7.5 8 L13 13.5"/></svg><svg class="abs" style="left:321px;top:916px" width="14" height="16" viewBox="0 0 14 16" fill="none" stroke="#b9bdd2" stroke-width="1.4"><path d="M10 1.5 L3 8 L10 14.5"/></svg><div class="abs" style="left:361px;top:907px;width:80px;height:31px;border:1px solid #c8c8c8;border-radius:5px;background:#fff"></div><svg class="abs" style="left:396px;top:915px" width="10" height="15" viewBox="0 0 10 15"><path d="M2.2 3.6 L5.6 1.3 H7.2 V13.1 H5.6 V3.4 L2.2 5.4 Z" fill="#222"/></svg><svg class="abs" style="left:464px;top:916px" width="14" height="16" viewBox="0 0 14 16" fill="none" stroke="#5f6a8a" stroke-width="1.4"><path d="M4 1.5 L11 8 L4 14.5"/></svg><svg class="abs" style="left:497px;top:916px" width="16" height="16" viewBox="0 0 16 16" fill="none" stroke="#555" stroke-width="1.7"><path d="M3 2.5 L8.5 8 L3 13.5"/><path d="M13.5 2 V14"/></svg><div class="t" style="left:545px;top:915.80px;font-size:16px;color:#444a5e;letter-spacing:0.48px"><b style="color:#1a1a1a">1/4</b> trang (<b style="color:#1a1a1a">152</b> bản ghi)</div><div class="abs" style="left:1792px;top:903px;width:115px;height:40px;border:1px solid #cfcfcf;border-radius:6px;background:#fff"></div><div class="t" style="left:1819px;top:914.90px;font-size:16px;font-weight:700;color:#2b3245;">Quay lại</div></body></html>
